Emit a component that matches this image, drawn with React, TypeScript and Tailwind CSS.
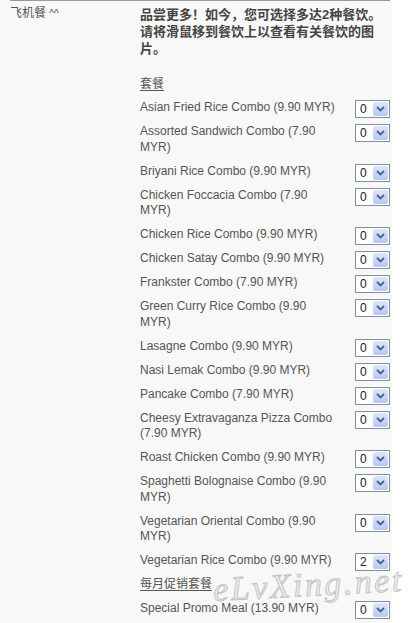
import React from "react";

type Meal = { name: string; qty: number };

const COMBOS: Meal[] = [
  { name: "Asian Fried Rice Combo (9.90 MYR)", qty: 0 },
  { name: "Assorted Sandwich Combo (7.90 MYR)", qty: 0 },
  { name: "Briyani Rice Combo (9.90 MYR)", qty: 0 },
  { name: "Chicken Foccacia Combo (7.90 MYR)", qty: 0 },
  { name: "Chicken Rice Combo (9.90 MYR)", qty: 0 },
  { name: "Chicken Satay Combo (9.90 MYR)", qty: 0 },
  { name: "Frankster Combo (7.90 MYR)", qty: 0 },
  { name: "Green Curry Rice Combo (9.90 MYR)", qty: 0 },
  { name: "Lasagne Combo (9.90 MYR)", qty: 0 },
  { name: "Nasi Lemak Combo (9.90 MYR)", qty: 0 },
  { name: "Pancake Combo (7.90 MYR)", qty: 0 },
  { name: "Cheesy Extravaganza Pizza Combo (7.90 MYR)", qty: 0 },
  { name: "Roast Chicken Combo (9.90 MYR)", qty: 0 },
  { name: "Spaghetti Bolognaise Combo (9.90 MYR)", qty: 0 },
  { name: "Vegetarian Oriental Combo (9.90 MYR)", qty: 0 },
  { name: "Vegetarian Rice Combo (9.90 MYR)", qty: 2 },
];

const PROMOS: Meal[] = [{ name: "Special Promo Meal (13.90 MYR)", qty: 0 }];

// old-school XP style dropdown
function QtySelect({ value }: { value: number }) {
  return (
    <div className="flex h-[18px] w-[35px] shrink-0 items-center border border-[#7f8f9f] bg-white">
      <span className="flex-1 pl-[4px] text-[12px] leading-none text-[#222]">{value}</span>
      <span className="mr-[1px] flex h-[14px] w-[15px] items-center justify-center rounded-[2px] bg-gradient-to-b from-[#dce6fb] to-[#b6c9f1]">
        <svg width="9" height="6" viewBox="0 0 9 6">
          <path d="M1 1 L4.5 4.5 L8 1" fill="none" stroke="#4d6185" strokeWidth="1.8" />
        </svg>
      </span>
    </div>
  );
}

function MealRow({ meal }: { meal: Meal }) {
  return (
    <div className="flex items-start justify-between pt-[4px] pb-[4.5px]">
      <span className="w-[198px] text-[12px] leading-[15.5px] text-[#555]">{meal.name}</span>
      <div className="h-[15.5px]">
        <QtySelect value={meal.qty} />
      </div>
    </div>
  );
}

function GroupTitle({ children }: { children: React.ReactNode }) {
  return (
    <div className="text-[12px] leading-[16px] text-[#555] underline underline-offset-2">
      {children}
    </div>
  );
}

export default function App() {
  return (
    <div
      className="relative flex h-[623px] w-[414px] overflow-hidden"
      style={{ fontFamily: '"Liberation Sans", Arial, "Noto Sans CJK SC", sans-serif' }}
    >
      <div className="w-[392px] bg-[#f8f8f8] pl-[10px]">
        <div className="flex w-[380px] border-t border-[#999]">
          {/* label column */}
          <div className="w-[130px] pt-[4px] text-[12px] leading-[16px] text-[#555]">
            飞机餐 <span className="text-[10px]">^^</span>
          </div>

          {/* meal options */}
          <div className="w-[250px]">
            <p className="pt-[5px] text-[13px] font-bold leading-[17px] text-[#444]">
              品尝更多！如今，您可选择多达2种餐饮。请将滑鼠移到餐饮上以查看有关餐饮的图片。
            </p>

            <div className="mt-[19px] mb-[4px]">
              <GroupTitle>套餐</GroupTitle>
            </div>
            {COMBOS.map((m) => (
              <MealRow key={m.name} meal={m} />
            ))}

            <div className="mt-[3px] mb-[5px]">
              <GroupTitle>每月促销套餐</GroupTitle>
            </div>
            {PROMOS.map((m) => (
              <MealRow key={m.name} meal={m} />
            ))}
          </div>
        </div>
      </div>
      <div className="flex-1 bg-white" />

      {/* watermark */}
      <div
        className="pointer-events-none absolute left-[213px] top-[568px] -rotate-[3deg] text-[34px] italic leading-none tracking-[2.5px] text-[rgba(220,220,220,0.45)]"
        style={{ fontFamily: '"Liberation Serif", serif', WebkitTextStroke: "1px rgba(150,150,150,0.5)" }}
      >
        eLvXing.net
      </div>
    </div>
  );
}
